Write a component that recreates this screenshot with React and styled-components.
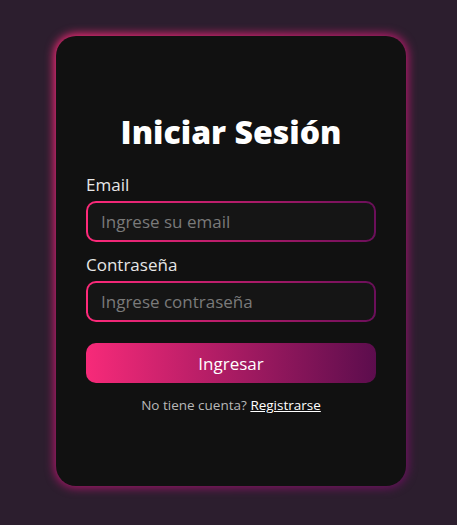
import React from "react";
import styled, { createGlobalStyle } from "styled-components";

const GlobalStyle = createGlobalStyle`
  * {
    box-sizing: border-box;
  }

  body {
    margin: 0;
    background-color: #2c1e2e;
    font-family: "Open Sans", "Noto Sans", sans-serif;
  }
`;

const Page = styled.div`
  min-height: 525px;
  display: flex;
  justify-content: center;
  padding: 36px 0 0 5px;
`;

const Card = styled.form`
  position: relative;
  isolation: isolate;
  width: 350px;
  height: 450px;
  padding: 4px 30px 0;
  border-radius: 20px;
  display: flex;
  flex-direction: column;
  justify-content: center;

  &:before {
    content: "";
    position: absolute;
    inset: -2px;
    z-index: -2;
    border-radius: 22px;
    background: linear-gradient(135deg, #ff2a7a 0%, #b0186a 50%, #6a1060 100%);
    filter: blur(5px);
  }

  &:after {
    content: "";
    position: absolute;
    inset: 0;
    z-index: -1;
    border-radius: 20px;
    background-color: #111111;
  }
`;

const Title = styled.h1`
  margin: 0 0 22px;
  font-size: 32px;
  line-height: 40px;
  font-weight: 800;
  color: #ffffff;
  text-align: center;
`;

const Label = styled.label`
  display: block;
  margin-bottom: 5px;
  font-size: 17px;
  line-height: 22px;
  color: #e6e6e6;
`;

const Field = styled.div`
  margin-bottom: ${({ last }) => (last ? "21px" : "12px")};
`;

const Input = styled.input`
  display: block;
  width: 100%;
  height: 41px;
  padding: 0 13px;
  border: 2px solid transparent;
  border-radius: 10px;
  background:
    linear-gradient(#151515, #151515) padding-box,
    linear-gradient(90deg, #ff2a7a, #6b0f5a) border-box;
  font-family: inherit;
  font-size: 17px;
  color: #eeeeee;
  outline: none;

  &::placeholder {
    color: #7a7a7a;
  }
`;

const Button = styled.button`
  display: block;
  width: 100%;
  height: 40px;
  border: none;
  border-radius: 10px;
  background: linear-gradient(90deg, #f72a79, #5c0d4d);
  font-family: inherit;
  font-size: 17px;
  color: #ffffff;
  cursor: pointer;
`;

const Footer = styled.p`
  margin: 13px 0 0;
  font-size: 13.5px;
  line-height: 18px;
  text-align: center;
  color: #b8b8b8;
`;

const Link = styled.a`
  color: #ffffff;
  text-decoration: underline;
`;

const App = () => {
  return (
    <>
      <GlobalStyle />
      <Page>
        <Card onSubmit={e => e.preventDefault()}>
          <Title>Iniciar Sesión</Title>
          <Field>
            <Label htmlFor="email">Email</Label>
            <Input id="email" type="email" placeholder="Ingrese su email" />
          </Field>
          <Field last>
            <Label htmlFor="password">Contraseña</Label>
            <Input
              id="password"
              type="password"
              placeholder="Ingrese contraseña"
            />
          </Field>
          <Button type="submit">Ingresar</Button>
          <Footer>
            No tiene cuenta? <Link href="#">Registrarse</Link>
          </Footer>
        </Card>
      </Page>
    </>
  );
};

export default App;
